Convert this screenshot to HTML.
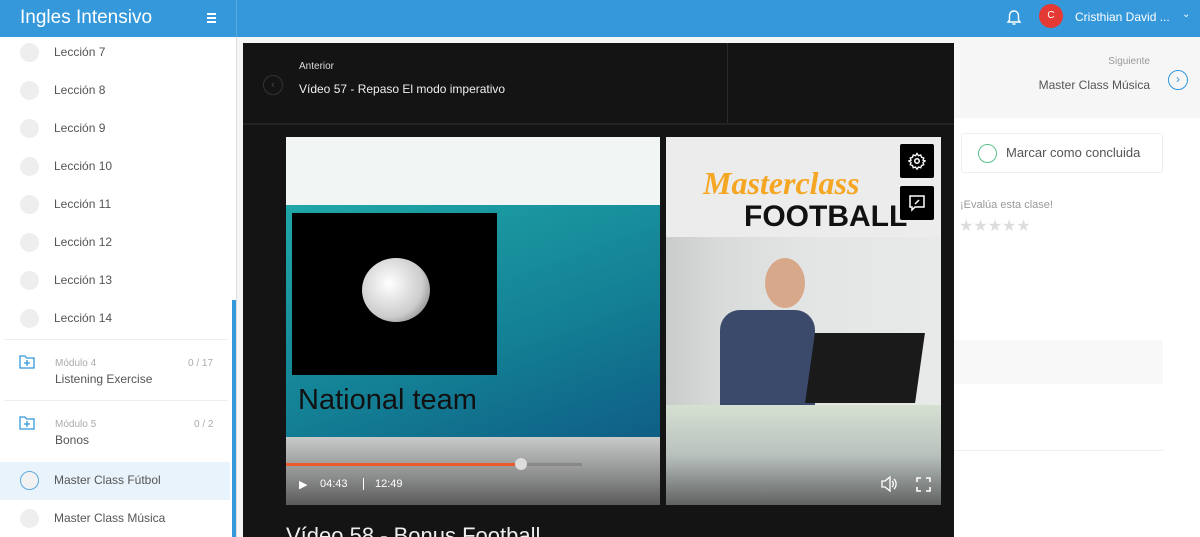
<!DOCTYPE html>
<html><head><meta charset="utf-8"><style>
*{margin:0;padding:0;box-sizing:border-box}
html,body{width:1200px;height:537px;overflow:hidden}
body{font-family:"Liberation Sans",sans-serif;background:#f6f6f6;position:relative}
.a{position:absolute}
.top{left:0;top:0;width:1200px;height:37px;background:#3498db}
.side{left:0;top:37px;width:237px;height:500px;background:#fff;border-right:1px solid #ddd;overflow:hidden}
.it{position:absolute;left:0;width:230px;height:38px;font-size:12px;color:#555}
.it .c{position:absolute;left:20px;top:10px;width:19px;height:19px;border-radius:50%;background:#eee}
.it span{position:absolute;left:54px;top:12px}
.star{color:#ddd;font-size:16px}
</style></head><body>
<div class="a top"></div>
<div class="a" style="left:236px;top:0;width:1px;height:37px;background:#5aa9e0"></div>
<div class="a" style="left:20px;top:7px;color:#fff;font-size:19px">Ingles Intensivo</div>
<div class="a" style="left:207px;top:13px;width:9px;height:2px;background:#fff;box-shadow:0 4px 0 #fff,0 8px 0 #fff"></div>
<svg class="a" style="left:1006px;top:9px" width="16" height="18" viewBox="0 0 16 18"><path d="M8 2c-3 0-4.5 2.3-4.5 5v4L2 13h12l-1.5-2V7C12.5 4.3 11 2 8 2z M6.5 15h3" fill="none" stroke="#fff" stroke-width="1.4"/></svg>
<div class="a" style="left:1039px;top:4px;width:24px;height:24px;border-radius:50%;background:#e53935;color:#fff;font-size:10px;text-align:center;line-height:24px">C</div>
<div class="a" style="left:1075px;top:10px;color:#fff;font-size:12px">Cristhian David ...</div>
<div class="a" style="left:1182px;top:9px;color:#fff;font-size:10px">&#8964;</div>

<div class="a side">
<div class="it" style="top:-4px"><div class="c"></div><span>Lección 7</span></div>
<div class="it" style="top:34px"><div class="c"></div><span>Lección 8</span></div>
<div class="it" style="top:72px"><div class="c"></div><span>Lección 9</span></div>
<div class="it" style="top:110px"><div class="c"></div><span>Lección 10</span></div>
<div class="it" style="top:148px"><div class="c"></div><span>Lección 11</span></div>
<div class="it" style="top:186px"><div class="c"></div><span>Lección 12</span></div>
<div class="it" style="top:224px"><div class="c"></div><span>Lección 13</span></div>
<div class="it" style="top:262px"><div class="c"></div><span>Lección 14</span></div>
<div class="a" style="left:4px;top:302px;width:224px;height:1px;background:#eee"></div>
<svg class="a" style="left:19px;top:318px" width="16" height="14" viewBox="0 0 16 14"><path d="M1 1h5l1.5 2H15v10H1z" fill="none" stroke="#3498db" stroke-width="1.3"/><path d="M8 5v6M5 8h6" stroke="#3498db" stroke-width="1.3"/></svg>
<div class="a" style="left:55px;top:321px;font-size:10px;color:#aaa">Módulo 4</div>
<div class="a" style="left:188px;top:321px;font-size:10px;color:#aaa">0 / 17</div>
<div class="a" style="left:55px;top:335px;font-size:12px;color:#555">Listening Exercise</div>
<div class="a" style="left:4px;top:363px;width:224px;height:1px;background:#eee"></div>
<svg class="a" style="left:19px;top:379px" width="16" height="14" viewBox="0 0 16 14"><path d="M1 1h5l1.5 2H15v10H1z" fill="none" stroke="#3498db" stroke-width="1.3"/><path d="M8 5v6M5 8h6" stroke="#3498db" stroke-width="1.3"/></svg>
<div class="a" style="left:55px;top:382px;font-size:10px;color:#aaa">Módulo 5</div>
<div class="a" style="left:194px;top:382px;font-size:10px;color:#aaa">0 / 2</div>
<div class="a" style="left:55px;top:396px;font-size:12px;color:#555">Bonos</div>
<div class="it" style="top:425px;background:#e8f3fb;height:38px"><div class="c" style="background:#f2f2f2;border:1px solid #5aa9e0;top:9px"></div><span style="top:11px">Master Class Fútbol</span></div>
<div class="it" style="top:462px"><div class="c"></div><span>Master Class Música</span></div>
<div class="a" style="left:232px;top:263px;width:5px;height:240px;background:#3498db"></div>
</div>

<div class="a" style="left:243px;top:43px;width:711px;height:494px;background:#141414"></div>
<div class="a" style="left:727px;top:43px;width:1px;height:80px;background:#2a2a2a"></div>
<div class="a" style="left:243px;top:123px;width:711px;height:2px;background:#222"></div>
<div class="a" style="left:263px;top:75px;width:20px;height:20px;border-radius:50%;border:1px solid #333;color:#444;font-size:11px;text-align:center;line-height:18px">&#8249;</div>
<div class="a" style="left:299px;top:61px;color:#ddd;font-size:10px">Anterior</div>
<div class="a" style="left:299px;top:82px;color:#eee;font-size:12px">Vídeo 57 - Repaso El modo imperativo</div>

<div class="a" style="left:286px;top:137px;width:374px;height:68px;background:#f1f5f4"></div>
<div class="a" style="left:286px;top:205px;width:374px;height:232px;background:linear-gradient(160deg,#1fa7a8,#137f94 60%,#0f5e86)"></div>
<div class="a" style="left:292px;top:213px;width:205px;height:162px;background:#000"></div>
<div class="a" style="left:362px;top:258px;width:68px;height:64px;border-radius:50%;background:radial-gradient(circle at 40% 40%,#fff,#ccc 60%,#555)"></div>
<div class="a" style="left:298px;top:384px;font-size:29px;color:#111">National team</div>
<div class="a" style="left:286px;top:437px;width:374px;height:68px;background:linear-gradient(#c8cac9,#8a8b8b 60%,#5a5a5a)"></div>
<div class="a" style="left:286px;top:463px;width:296px;height:3px;background:#888"></div>
<div class="a" style="left:286px;top:463px;width:235px;height:3px;background:#ea5a2a"></div>
<div class="a" style="left:515px;top:458px;width:12px;height:12px;border-radius:50%;background:#ddd"></div>
<div class="a" style="left:299px;top:478px;color:#fff;font-size:11px">&#9654;</div>
<div class="a" style="left:320px;top:478px;color:#fff;font-size:11px">04:43</div>
<div class="a" style="left:363px;top:478px;width:1px;height:12px;background:#fff"></div>
<div class="a" style="left:375px;top:478px;color:#fff;font-size:11px">12:49</div>

<div class="a" style="left:666px;top:137px;width:275px;height:100px;background:#ececec"></div>
<div class="a" style="left:703px;top:165px;font-size:32px;color:#f5a623;font-style:italic;font-weight:bold;font-family:'Liberation Serif',serif">Masterclass</div>
<div class="a" style="left:744px;top:200px;font-size:30px;color:#111;font-weight:bold">FOOTBALL</div>
<div class="a" style="left:666px;top:237px;width:275px;height:168px;background:linear-gradient(90deg,#c9ccca 0,#d9dbda 20%,#e3e5e4 50%,#e8eae9)"></div>
<div class="a" style="left:720px;top:310px;width:95px;height:95px;background:#3b4a6b;border-radius:20px 20px 0 0"></div>
<div class="a" style="left:765px;top:258px;width:40px;height:50px;border-radius:50%;background:#d8a88a"></div>
<div class="a" style="left:810px;top:333px;width:110px;height:70px;background:#1a1a1a;transform:skewX(-8deg)"></div>
<div class="a" style="left:666px;top:405px;width:275px;height:100px;background:linear-gradient(#d6e0d2,#b9c1bd 50%,#606262)"></div>
<svg class="a" style="left:880px;top:476px" width="18" height="16" viewBox="0 0 18 16"><path d="M2 5h3l5-4v14l-5-4H2z" fill="none" stroke="#fff" stroke-width="1.3"/><path d="M12 5a4 4 0 010 6M14 3a7 7 0 010 10" fill="none" stroke="#fff" stroke-width="1.3"/></svg>
<svg class="a" style="left:916px;top:477px" width="15" height="15" viewBox="0 0 15 15"><path d="M1 5V1h4M10 1h4v4M14 10v4h-4M5 14H1v-4" fill="none" stroke="#fff" stroke-width="1.6"/></svg>
<div class="a" style="left:900px;top:144px;width:34px;height:34px;background:#000;border-radius:2px"></div>
<svg class="a" style="left:908px;top:152px" width="18" height="18" viewBox="0 0 24 24"><circle cx="12" cy="12" r="3" fill="none" stroke="#fff" stroke-width="2"/><path d="M12 2l2 3 3-1 1 3 3 1-1 3 3 1-3 2 1 3-3 1-1 3-3-1-2 3-2-3-3 1-1-3-3-1 1-3-3-2 3-1-1-3 3-1 1-3 3 1z" fill="none" stroke="#fff" stroke-width="1.8"/></svg>
<div class="a" style="left:900px;top:186px;width:34px;height:34px;background:#000;border-radius:2px"></div>
<svg class="a" style="left:908px;top:194px" width="18" height="18" viewBox="0 0 18 18"><path d="M2 2h14v11H7l-3 3v-3H2z" fill="none" stroke="#fff" stroke-width="1.5"/><path d="M7 10l4-4" stroke="#fff" stroke-width="1.5"/></svg>
<div class="a" style="left:286px;top:523px;color:#eee;font-size:22px">Vídeo 58 - Bonus Football</div>

<div class="a" style="left:954px;top:118px;width:246px;height:419px;background:#fff"></div>
<div class="a" style="left:1050px;top:56px;width:100px;text-align:right;font-size:10px;color:#999">Siguiente</div>
<div class="a" style="left:1000px;top:78px;width:150px;text-align:right;font-size:12px;color:#555">Master Class Música</div>
<div class="a" style="left:1168px;top:70px;width:20px;height:20px;border-radius:50%;border:1px solid #3498db;color:#3498db;font-size:12px;text-align:center;line-height:17px">&#8250;</div>
<div class="a" style="left:961px;top:133px;width:202px;height:40px;border:1px solid #eee;border-radius:3px;background:#fff"></div>
<div class="a" style="left:978px;top:144px;width:19px;height:19px;border-radius:50%;border:1.5px solid #5cc08a"></div>
<div class="a" style="left:1006px;top:145px;font-size:13px;color:#555">Marcar como concluida</div>
<div class="a" style="left:960px;top:199px;font-size:11px;color:#999">¡Evalúa esta clase!</div>
<div class="a star" style="left:959px;top:216px">★★★★★</div>
<div class="a" style="left:954px;top:340px;width:209px;height:44px;background:#f8f8f8"></div>
<div class="a" style="left:954px;top:450px;width:209px;height:1px;background:#eee"></div>
</body></html>
